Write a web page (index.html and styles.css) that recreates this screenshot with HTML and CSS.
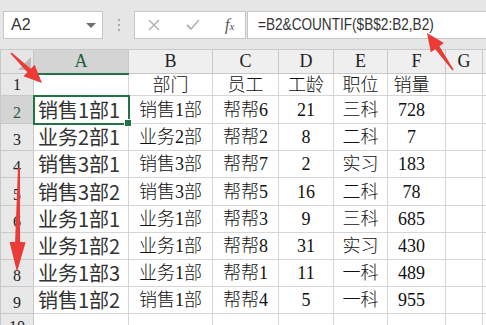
FILE: index.html
```html
<!DOCTYPE html>
<html lang="zh-CN">
<head>
    <meta charset="UTF-8">
    <title>COUNTIF</title>
    <link rel="stylesheet" href="styles.css">
</head>
<body>
    <div class="toolbar">
        <div class="namebox">
            <span>A2</span>
            <span class="drop"></span>
        </div>
        <div class="sep"><i></i><i></i><i></i></div>
        <div class="fbtns">
            <svg width="14" height="14" viewBox="0 0 14 14"><path d="M2 2 L12 12 M12 2 L2 12" stroke="#b5b5b5" stroke-width="1.6" fill="none"/></svg>
            <svg width="16" height="14" viewBox="0 0 16 14"><path d="M2 7 L6 11 L14 2" stroke="#b5b5b5" stroke-width="1.8" fill="none"/></svg>
            <span class="fx">f<sub>x</sub></span>
        </div>
        <div class="formula"><span>=B2&amp;COUNTIF($B$2:B2,B2)</span></div>
    </div>

    <table class="sheet">
        <colgroup>
            <col style="width:33px"><col style="width:95px"><col style="width:84px"><col style="width:66px">
            <col style="width:55px"><col style="width:54px"><col style="width:58px"><col style="width:37px"><col style="width:30px">
        </colgroup>
        <thead>
            <tr class="hdr">
                <th class="corner"><span class="tri"></span></th>
                <th class="sel">A</th><th>B</th><th>C</th><th>D</th><th>E</th><th>F</th><th>G</th><th></th>
            </tr>
        </thead>
        <tbody id="rows"></tbody>
    </table>

    <svg class="arrows" width="486" height="325" viewBox="0 0 486 325">
        <polygon points="10.4,53.6 27.3,72.3 23.5,76.2 42,83 34.6,64.7 30.8,68.7 11.6,52.4"/>
        <polygon points="18,168 15.1,242 9.6,241.9 17,272 25.6,242.2 20.1,242 20,168"/>
        <polygon points="453.6,69.5 439.4,46.3 443.9,43.1 427,33 430.8,52.3 435.3,49.2 452.4,70.5"/>
    </svg>

    <script>
        const data = [
            ["", "部门", "员工", "工龄", "职位", "销量"],
            ["销售1部1", "销售1部", "帮帮6", "21", "三科", "728"],
            ["业务2部1", "业务2部", "帮帮2", "8", "二科", "7"],
            ["销售3部1", "销售3部", "帮帮7", "2", "实习", "183"],
            ["销售3部2", "销售3部", "帮帮5", "16", "二科", "78"],
            ["业务1部1", "业务1部", "帮帮3", "9", "三科", "685"],
            ["业务1部2", "业务1部", "帮帮8", "31", "实习", "430"],
            ["业务1部3", "业务1部", "帮帮1", "11", "一科", "489"],
            ["销售1部2", "销售1部", "帮帮4", "5", "一科", "955"],
            ["", "", "", "", "", ""]
        ];
        const heights = [22, 28, 27, 27, 28, 27, 27, 27, 27, 24];
        const rows = document.getElementById("rows");
        data.forEach((r, i) => {
            const tr = document.createElement("tr");
            tr.style.height = heights[i] + "px";
            let html = `<th class="rn${i === 1 ? " sel" : ""}">${i + 1}</th>`;
            r.forEach((v, j) => {
                let cls = "c" + j;
                if (i === 1 && j === 0) cls += " active";
                html += `<td class="${cls}">${v}${i === 1 && j === 0 ? '<span class="handle"></span>' : ""}</td>`;
            });
            html += "<td></td><td></td>";
            tr.innerHTML = html;
            rows.appendChild(tr);
        });
    </script>
</body>
</html>
```

FILE: styles.css
```css
body {
    margin: 0;
    width: 486px;
    height: 325px;
    overflow: hidden;
    position: relative;
    background: #fff;
    font-family: 'Liberation Serif', 'Noto Sans CJK SC', serif;
}

.toolbar {
    height: 49px;
    background: #e6e6e6;
    display: flex;
    align-items: flex-start;
    padding-top: 11px;
    box-sizing: border-box;
}

.namebox {
    margin-left: 3px;
    width: 100px;
    height: 28px;
    background: #fff;
    border: 1px solid #c6c6c6;
    box-sizing: border-box;
    display: flex;
    align-items: center;
    justify-content: space-between;
    padding: 0 6px 0 7px;
    font-family: 'Liberation Sans', sans-serif;
    font-size: 16px;
    color: #333;
}

.drop {
    width: 0;
    height: 0;
    border-left: 5px solid transparent;
    border-right: 5px solid transparent;
    border-top: 5px solid #707070;
}

.sep {
    width: 31px;
    height: 28px;
    display: flex;
    flex-direction: column;
    align-items: center;
    justify-content: center;
    gap: 3px;
}

.sep i {
    width: 2px;
    height: 2px;
    background: #a8a8a8;
}

.fbtns {
    width: 112px;
    height: 28px;
    background: #fff;
    border: 1px solid #c6c6c6;
    box-sizing: border-box;
    display: flex;
    align-items: center;
    padding-left: 12px;
    gap: 24px;
}

.fx {
    font-family: 'Liberation Serif', serif;
    font-style: italic;
    font-size: 16px;
    color: #555;
}

.fx sub {
    font-size: 11px;
    vertical-align: 0;
}

.formula {
    flex: 1;
    margin-left: 1px;
    height: 28px;
    background: #fff;
    border: 1px solid #c6c6c6;
    border-right: none;
    box-sizing: border-box;
    padding-left: 10px;
    line-height: 26px;
    font-family: 'Liberation Sans', sans-serif;
    font-size: 16px;
    color: #333;
    white-space: nowrap;
}

.formula span {
    display: inline-block;
    transform: scaleX(0.85);
    transform-origin: left center;
}

.sheet {
    border-collapse: collapse;
    table-layout: fixed;
    width: 512px;
}

.sheet th {
    background: #efefef;
    border: 1px solid #c8c8c8;
    font-weight: normal;
    font-size: 18px;
    color: #222;
    padding: 0;
    text-align: center;
}

.hdr {
    height: 24px;
}

.sheet th.sel {
    background: #d4d4d4;
    color: #1e5e3c;
}

.hdr th.sel {
    border-bottom: 2px solid #217346;
}

.corner {
    background: #e6e6e6 !important;
    position: relative;
}

.tri {
    position: absolute;
    right: 2px;
    bottom: 3px;
    width: 0;
    height: 0;
    border-left: 13px solid transparent;
    border-bottom: 13px solid #b8b8b8;
}

.sheet th.rn {
    background: #e8e8e8;
    font-size: 16px;
    vertical-align: bottom;
    padding-bottom: 1px;
}

.sheet th.rn.sel {
    background: #d4d4d4;
}

.sheet td {
    border: 1px solid #d6d6d6;
    padding: 0;
    font-size: 18px;
    font-weight: 300;
    color: #111;
    text-align: center;
    white-space: nowrap;
    overflow: hidden;
    line-height: 20px;
}

.sheet td.c0 {
    font-family: 'Noto Sans CJK SC', sans-serif;
    font-weight: normal;
    font-size: 20px;
    color: #333;
    text-align: left;
    padding-left: 4px;
    overflow: visible;
}

.sheet td.c5 {
    padding-right: 10px;
}

.sheet td.active {
    position: relative;
    outline: 2px solid #217346;
    outline-offset: -1px;
}

.handle {
    position: absolute;
    right: -4px;
    bottom: -4px;
    width: 6px;
    height: 6px;
    background: #217346;
    border: 1px solid #fff;
}

.arrows {
    position: absolute;
    left: 0;
    top: 0;
    pointer-events: none;
}

.arrows polygon {
    fill: #ea3b36;
}
```
